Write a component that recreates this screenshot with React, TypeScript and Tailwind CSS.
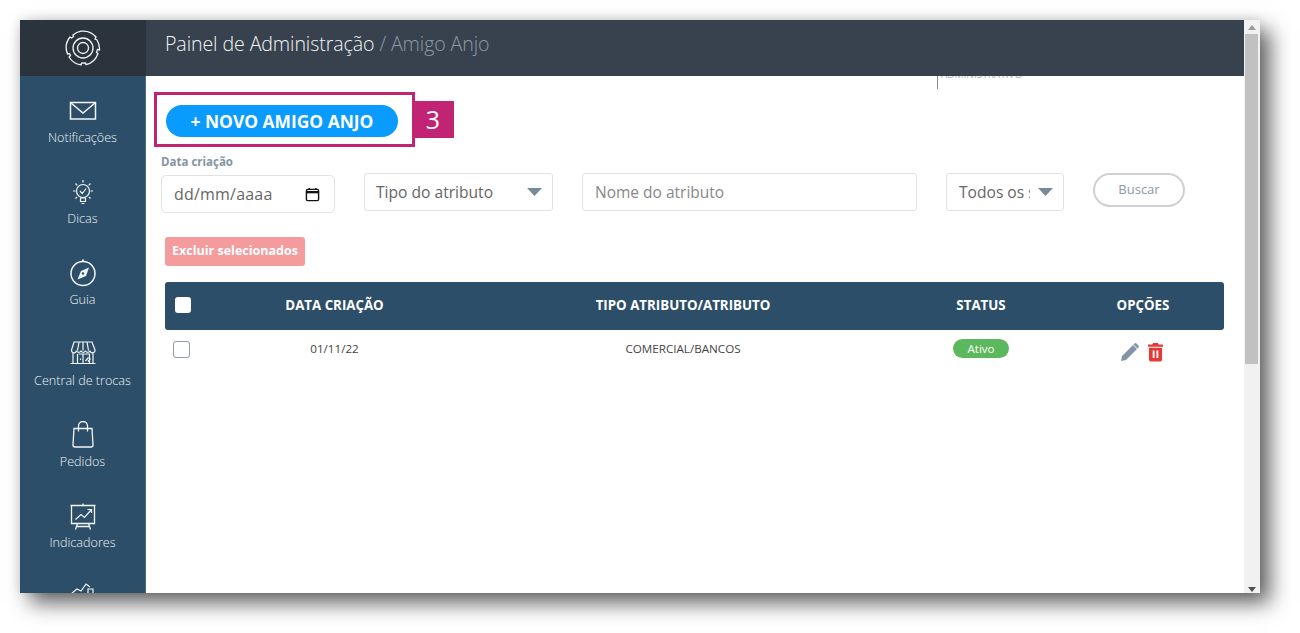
import React from "react";

const Nav = ({ label, children }: { label: string; children: React.ReactNode }) => (
  <div className="h-[81px] flex flex-col items-center shrink-0">
    <svg width="30" height="30" viewBox="0 0 30 30" fill="none" stroke="#f2f5f7" strokeWidth="1.2" className="shrink-0">
      {children}
    </svg>
    <div className="text-[12.6px] font-light leading-[18px] mt-[2px] text-[#eef2f5] whitespace-nowrap">{label}</div>
  </div>
);

const Caret = () => (
  <svg width="15" height="8" viewBox="0 0 15 8" className="shrink-0"><path d="M0 0H15L7.500 8Z" fill="#778a9a" /></svg>
);

export default function App() {
  return (
    <div className="w-[1300px] h-[633px] bg-white p-[20px] overflow-hidden font-['Open_Sans',sans-serif]">
      <div className="w-[1240px] h-[573px] flex overflow-hidden bg-white shadow-[10px_10px_20px_rgba(0,0,0,0.62),-1px_-1px_10px_rgba(0,0,0,0.1)]">
        <aside className="w-[126px] shrink-0 bg-[#2c4e68] flex flex-col overflow-hidden">
          <div className="h-[56px] shrink-0 bg-[#2b333c] flex items-center justify-center">
            <svg width="38" height="38" viewBox="0 0 38 38" fill="none" stroke="#f2f5f7" strokeWidth="1.3">
              <circle cx="19" cy="19" r="5.5" />
              <circle cx="19" cy="19" r="10" />
              <path d="M17 2.2A17 17 0 0 1 32 8l-1 2 2 1a17 17 0 0 1 2.5 10l-2-.5-1 3 1.5 1A17 17 0 0 1 22 35.7l-.5-1.700-4 .2-.5 1.700A17 17 0 0 1 5 28l1.500-1.500-1-2-2 .5A17 17 0 0 1 6 8l1.500 1 2-1.500L9 6A17 17 0 0 1 17 2.200Z" />
            </svg>
          </div>
          <div className="flex-1 pt-[21px] flex flex-col border-r border-[#4d6a80] overflow-hidden">
            <Nav label="Notificações">
              <rect x="2.500" y="5.500" width="25" height="16.500" strokeWidth="1.500" />
              <path d="M3 6l12 10L27 6" strokeWidth="1.500" />
            </Nav>
            <Nav label="Dicas">
              <circle cx="15" cy="13" r="6.500" />
              <path d="M12 13l2.200 2.500 4-5M12.500 20h5v3.500h-5zM13.500 25.500h3M15 2v2.500M5 13h2.500M22.500 13H25M7.500 5.500l1.800 1.800M22.500 5.500l-1.800 1.800M7.500 20.500l1.500-1.500M22.500 20.500L21 19" />
            </Nav>
            <Nav label="Guia">
              <circle cx="15" cy="14.500" r="12" strokeWidth="1.500" />
              <path d="M14 1.500h2" strokeWidth="2" />
              <path d="M21 8.500l-8 3.500-3.500 8.500 8.500-3.500z" fill="#f2f5f7" stroke="none" />
              <circle cx="15" cy="14.500" r="1.200" fill="#2c4e68" stroke="none" />
            </Nav>
            <Nav label="Central de trocas">
              <path d="M6 2h18l3 8a2.300 2.300 0 0 1-5 .5a2.300 2.300 0 0 1-4.500 0a2.300 2.300 0 0 1-4.500 0a2.300 2.300 0 0 1-4.500 0a2.300 2.300 0 0 1-5-.5zM11 2l-1.500 8.500M15 2v8.500M19 2l1.500 8.500M5 12v11.500M25 12v11.500M2.500 23.500h25M9.500 14v9.500M15 14v9.500M10.500 14h11v9.500M17.500 21l3-3.500M20 21.500l2.500-3M12.500 18.500v1.500" />
            </Nav>
            <Nav label="Pedidos">
              <path d="M6 7.500h18l1 16.500q0 2-2 2h-16q-2 0-2-2zM10.500 10.500V5a4.500 4.500 0 0 1 9 0v5.500" strokeWidth="1.300" />
            </Nav>
            <Nav label="Indicadores">
              <path d="M2.500 3.500h25M3.500 3.500v18h23v-18M15 1.500v2M9.500 21.500L7.500 27.500M20.500 21.500L22.500 27.500M8.500 24.500h13" strokeWidth="1.300" />
              <path d="M7.500 17.500l5.500-5 3.500 3 6.500-7.500M19.500 7.500h4v3.500" strokeWidth="1.200" />
            </Nav>
            <svg width="30" height="30" viewBox="0 0 30 30" fill="none" stroke="#f2f5f7" strokeWidth="1.200" className="self-center shrink-0 -mt-[4px]">
              <path d="M3 15l6-5 4 2 5-7 4 3M20 10h5v6h-5z" />
            </svg>
          </div>
        </aside>

        <main className="flex-1 min-w-0 flex flex-col overflow-hidden">
          <header className="h-[56px] shrink-0 bg-[#37424e] flex items-start pt-[10px] pl-[19px] text-[19.6px] leading-[28px] font-light tracking-[-0.1px] whitespace-nowrap">
            <span className="text-[#f2f4f6]">Painel de Administração</span>
            <span className="text-[#8e99a4] ml-[5px]">/ Amigo Anjo</span>
          </header>

          <div className="h-[13px] shrink-0 ml-[791px] w-[95px] border-l border-[#7f8c99] overflow-hidden">
            <div className="-mt-[8px] pl-[3px] text-[10px] leading-[12px] text-[#a9b4c0] whitespace-nowrap">ADMINISTRATIVO</div>
          </div>

          <div className="flex items-start ml-[8px] mt-[3px]">
            <div className="w-[261px] h-[55px] border-[3px] border-[#c02472] pl-[9px] pt-[10px] shrink-0">
              <button className="w-[232px] h-[32px] rounded-full bg-[#0a9bff] text-white text-[17.4px] font-bold leading-[32px] whitespace-nowrap">+ NOVO AMIGO ANJO</button>
            </div>
            <div className="w-[39px] h-[37px] mt-[9px] pr-[3px] bg-[#c02472] text-white text-[25px] leading-[37px] text-center">3</div>
          </div>

          <div className="ml-[15px] mt-[7px] text-[11.5px] font-bold leading-[16px] text-[#8494a4]">Data criação</div>

          <div className="flex items-start ml-[15px] mt-[5px]">
            <div className="w-[174px] h-[38px] rounded-[5px] border border-[#e2e2e2] flex items-center justify-between pl-[12px] pr-[14px] text-[16px] text-[#666] shrink-0">
              <span className="tracking-[0.2px]">dd/mm/aaaa</span>
              <svg width="15" height="15" viewBox="0 0 16 16" fill="none" stroke="#111" strokeWidth="1.500">
                <rect x="1.500" y="2.500" width="13" height="12" rx="1.500" />
                <path d="M1.500 5.500h13" strokeWidth="2.500" />
                <path d="M4.500 1v2M11.500 1v2" />
              </svg>
            </div>
            <div className="w-[189px] h-[38px] -mt-[2px] ml-[29px] rounded-[3px] border border-[#e2e2e2] flex items-center justify-between pl-[11px] pr-[10px] text-[15.6px] text-[#666] shrink-0">
              <span className="pt-[2px]">Tipo do atributo</span>
              <Caret />
            </div>
            <div className="w-[335px] h-[38px] -mt-[2px] ml-[29px] rounded-[3px] border border-[#e2e2e2] flex items-center pl-[12px] text-[15.5px] text-[#888] shrink-0">
              <span className="pt-[2px]">Nome do atributo</span>
            </div>
            <div className="w-[118px] h-[38px] -mt-[2px] ml-[29px] rounded-[3px] border border-[#e2e2e2] flex items-center justify-between pl-[12px] pr-[10px] text-[15.6px] text-[#666] shrink-0">
              <span className="pt-[2px] w-[71px] overflow-hidden whitespace-nowrap">Todos os status</span>
              <Caret />
            </div>
            <button className="w-[92px] h-[34px] -mt-[2px] ml-[29px] rounded-full border-2 border-[#d0d0d0] text-[13px] text-[#8d99ab] shrink-0">Buscar</button>
          </div>

          <button className="ml-[19px] mt-[24px] w-[140px] h-[29px] rounded-[3px] bg-[#f39b9d] text-white text-[12.5px] font-bold shrink-0 whitespace-nowrap">Excluir selecionados</button>

          <div className="ml-[19px] mt-[16px] w-[1059px] h-[48px] rounded-[3px] bg-[#2c4e68] grid grid-cols-[38px_263px_434px_162px_162px] items-center text-white text-[13.3px] font-bold text-center shrink-0">
            <div className="w-[16px] h-[16px] ml-[10px] mb-[2px] rounded-[3px] bg-white" />
            <div>DATA CRIAÇÃO</div>
            <div>TIPO ATRIBUTO/ATRIBUTO</div>
            <div>STATUS</div>
            <div>OPÇÕES</div>
          </div>

          <div className="ml-[19px] mt-[9px] w-[1059px] h-[28px] grid grid-cols-[38px_263px_434px_162px_162px] items-start text-[#444] text-[11.65px] text-center shrink-0">
            <div className="w-[17px] h-[17px] ml-[8px] mt-[2px] rounded-[3px] border border-[#8f9ba8] bg-white" />
            <div className="leading-[20px]">01/11/22</div>
            <div className="leading-[20px]">COMERCIAL/BANCOS</div>
            <div className="flex justify-center">
              <span className="w-[56px] h-[19px] rounded-full bg-[#5cb85c] text-white text-[11.5px] leading-[19px]">Ativo</span>
            </div>
            <div className="flex justify-center items-center gap-[8px] mt-[3px] pr-[3px]">
              <svg width="20" height="20" viewBox="0 0 20 20"><path d="M1 19l1-5L13 3l4 4L6 18zM14.500 1.500a1.500 1.500 0 0 1 2 0l2 2a1.500 1.500 0 0 1 0 2l-1 1-4-4z" fill="#8294a8" /></svg>
              <svg width="15" height="20" viewBox="0 0 16 20"><path d="M5.500 0.500h5l1 1.500H16v2.500H0V2h4.500zM1 5.500h14v12.500a2 2 0 0 1-2 2H3a2 2 0 0 1-2-2zM5 8.500v8h2v-8zM9 8.500v8h2v-8z" fill="#e53935" fillRule="evenodd" /></svg>
            </div>
          </div>
        </main>

        <div className="w-[16px] shrink-0 bg-[#f1f1f1] flex flex-col">
          <div className="h-[14px] flex items-center justify-center"><svg width="8" height="5" viewBox="0 0 8 5"><path d="M0 5L4 0l4 5z" fill="#9a9a9a" /></svg></div>
          <div className="h-[330px] ml-[1px] mr-[2px] bg-[#c1c1c1]" />
          <div className="flex-1" />
          <div className="h-[6px] flex items-start justify-center"><svg width="8" height="5" viewBox="0 0 8 5"><path d="M0 0h8L4 5z" fill="#505050" /></svg></div>
        </div>
      </div>
    </div>
  );
}
